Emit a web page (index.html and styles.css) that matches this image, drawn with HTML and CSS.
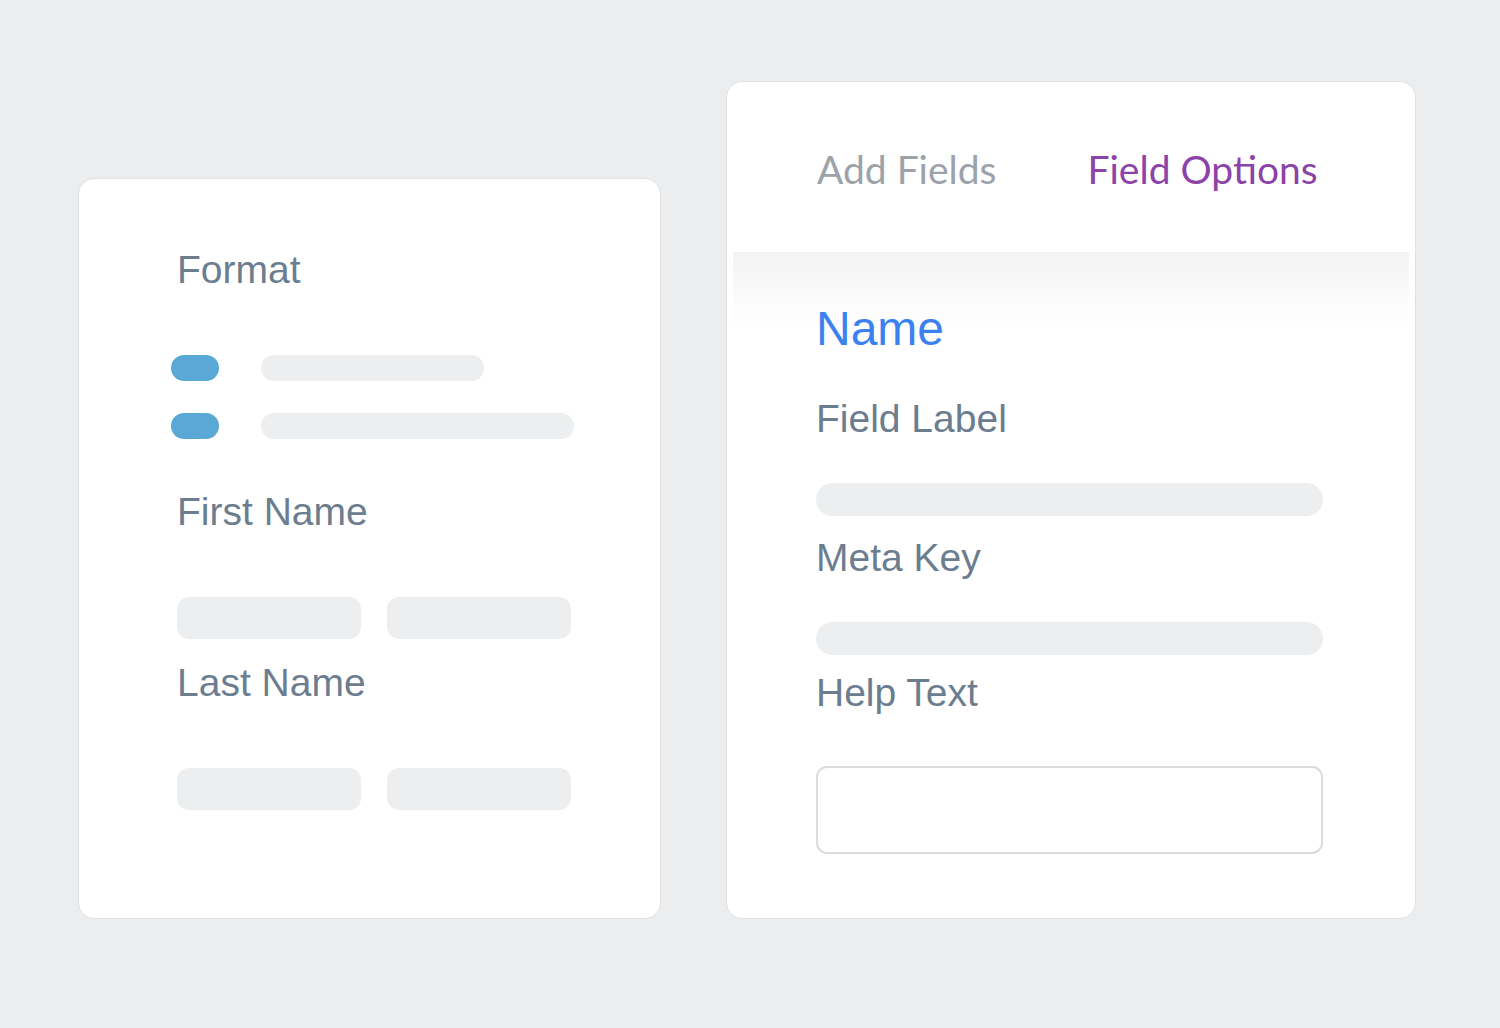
FILE: index.html
```html
<!doctype html>
<html>
<head>
	<meta charset="utf-8">
	<meta name="viewport" content="width=device-width, initial-scale=1.0">
	<title>Name field</title>
	<link rel="stylesheet" href="styles.css">
</head>
<body>
	<div class="stage">
		<div class="card preview">
			<h3 class="label label-format">Format</h3>
			<div class="format-rows">
				<div class="format-row">
					<span class="pill"></span>
					<span class="line line-short"></span>
				</div>
				<div class="format-row">
					<span class="pill"></span>
					<span class="line line-long"></span>
				</div>
			</div>

			<h3 class="label label-first">First Name</h3>
			<div class="pair">
				<span class="box"></span>
				<span class="box"></span>
			</div>

			<h3 class="label label-last">Last Name</h3>
			<div class="pair">
				<span class="box"></span>
				<span class="box"></span>
			</div>
		</div>

		<div class="card options">
			<div class="tabs">
				<span class="tab">Add Fields</span>
				<span class="tab active">Field Options</span>
			</div>
			<div class="options-body">
				<h2 class="field-title">Name</h2>
				<h3 class="label opt-label">Field Label</h3>
				<span class="bar"></span>
				<h3 class="label opt-label opt-meta">Meta Key</h3>
				<span class="bar"></span>
				<h3 class="label opt-label opt-help">Help Text</h3>
				<span class="textbox"></span>
			</div>
		</div>
	</div>
</body>
</html>
```

FILE: styles.css
```css
:root {
	--bg: #ebedef;
	--card: #fff;
	--label: #6c7d8f;
	--muted: #9ba2aa;
	--purple: #8c43a8;
	--blue: #3b82f0;
	--pill: #5aa8d6;
	--skeleton: #eceef0;
}
body {
	background: var(--bg);
	margin: 0;
	padding: 0;
	font-family: "Liberation Sans", Arial, sans-serif;
}
.stage {
	display: flex;
	align-items: flex-end;
	gap: 65px;
	padding: 81px 0 0 78px;
}
.card {
	background: var(--card);
	border: 1px solid #dfe1e3;
	border-radius: 16px;
	box-sizing: border-box;
}
.label {
	margin: 0;
	font-size: 39px;
	line-height: 48px;
	font-weight: 400;
	color: var(--label);
}

/* left: name field preview */
.preview {
	width: 583px;
	height: 741px;
	padding: 67px 0 0 98px;
}
.format-rows {
	display: flex;
	flex-direction: column;
	gap: 32px;
	margin: 61px 0 0 -6px;
}
.format-row {
	display: flex;
	align-items: center;
	gap: 42px;
}
.pill {
	width: 48px;
	height: 26px;
	border-radius: 13px;
	background: var(--pill);
}
.line {
	height: 26px;
	border-radius: 13px;
	background: var(--skeleton);
}
.line-short {
	width: 223px;
}
.line-long {
	width: 313px;
}
.label-first {
	margin-top: 49px;
}
.label-last {
	margin-top: 20px;
}
.pair {
	display: flex;
	gap: 26px;
	margin-top: 61px;
}
.box {
	width: 184px;
	height: 42px;
	border-radius: 12px;
	background: var(--skeleton);
}

/* right: field options panel */
.options {
	width: 690px;
	height: 838px;
	overflow: hidden;
}
.tabs {
	position: relative;
	z-index: 1;
	display: flex;
	gap: 91px;
	height: 170px;
	box-sizing: border-box;
	padding: 63px 0 0 90px;
	background: var(--card);
	border-radius: 16px 16px 0 0;
}
.tab {
	font-family: Lato, "Liberation Sans", sans-serif;
	font-size: 39px;
	line-height: 48px;
	color: var(--muted);
}
.tab.active {
	color: var(--purple);
}
.options-body {
	display: flex;
	flex-direction: column;
	align-items: flex-start;
	margin: 0 6px;
	padding: 49px 0 0 83px;
	background: linear-gradient(180deg, #f2f3f4 0, #fafafb 40px, #fff 80px);
}
.field-title {
	margin: 0;
	font-size: 48px;
	line-height: 56px;
	font-weight: 400;
	color: var(--blue);
}
.opt-label {
	margin-top: 38px;
}
.opt-meta {
	margin-top: 18px;
}
.opt-help {
	margin-top: 14px;
}
.bar {
	width: 507px;
	height: 33px;
	margin-top: 40px;
	border-radius: 17px;
	background: var(--skeleton);
}
.opt-meta + .bar {
	margin-top: 40px;
}
.textbox {
	width: 507px;
	height: 88px;
	margin-top: 49px;
	box-sizing: border-box;
	border: 2px solid #dadcde;
	border-radius: 11px;
}
```
